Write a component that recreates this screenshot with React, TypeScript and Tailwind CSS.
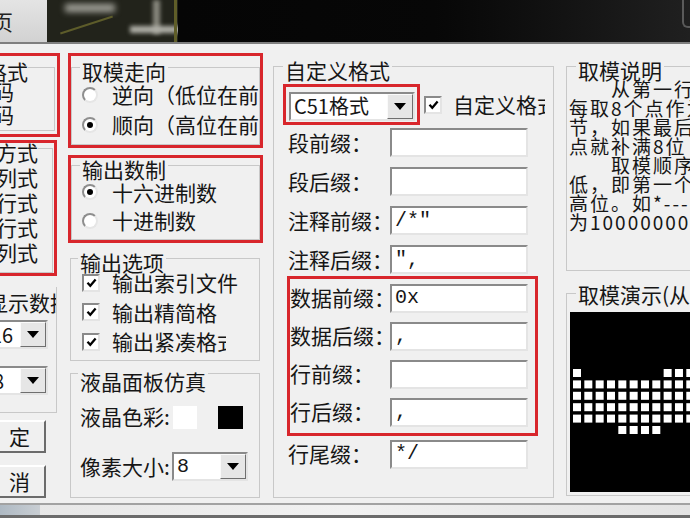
import type { ReactNode } from "react";

const red = "border-[3px] border-[#d8262c]";
const sunken =
  "border-2 border-t-[#8a8a8a] border-l-[#8a8a8a] border-r-[#e4e4e4] border-b-[#e4e4e4] bg-white";

function Group({
  title,
  className = "",
  legend = "ml-[8px] px-[2px] pt-[8px]",
  children,
}: {
  title: string;
  className?: string;
  legend?: string;
  children?: ReactNode;
}) {
  return (
    <fieldset className={`min-w-0 shrink-0 border border-[#c8c8c8] ${className}`}>
      <legend className={`whitespace-nowrap text-[21px] leading-[22px] ${legend}`}>{title}</legend>
      {children}
    </fieldset>
  );
}

function Radio({ checked = false }: { checked?: boolean }) {
  return (
    <span className="flex h-[16px] w-[16px] shrink-0 items-center justify-center rounded-full border-2 border-t-[#8e8e8e] border-l-[#8e8e8e] border-r-[#e6e6e6] border-b-[#e6e6e6] bg-white">
      {checked && <span className="h-[6px] w-[6px] rounded-full bg-black" />}
    </span>
  );
}

function Check() {
  return (
    <span className={`flex h-[18px] w-[18px] shrink-0 items-center justify-center ${sunken}`}>
      <svg width="11" height="10" viewBox="0 0 11 10">
        <path d="M1.5 4.8 L4.3 7.8 L9.6 1.6" fill="none" stroke="#000" strokeWidth="2.3" />
      </svg>
    </span>
  );
}

function DropButton() {
  return (
    <span className="flex h-full w-[26px] shrink-0 items-center justify-center border border-t-[#fafafa] border-l-[#fafafa] border-r-[#6f6f6f] border-b-[#6f6f6f] bg-[#e6e6e6]">
      <svg width="12" height="7" viewBox="0 0 12 7">
        <polygon points="0,0 12,0 6,7" fill="#000" />
      </svg>
    </span>
  );
}

function Combo({ value, className = "", mono = false }: { value: string; className?: string; mono?: boolean }) {
  return (
    <div className={`flex h-[29px] shrink-0 ${sunken} ${className}`}>
      <span
        className={`flex min-w-0 flex-1 items-center overflow-hidden whitespace-nowrap pl-[3px] text-[20px] ${
          mono ? "font-['Liberation_Mono',monospace]" : ""
        }`}
      >
        {value}
      </span>
      <DropButton />
    </div>
  );
}

function Field({ value = "" }: { value?: string }) {
  return (
    <div
      className={`flex h-[29px] w-[138px] shrink-0 items-center pl-[3px] font-['Liberation_Mono',monospace] text-[20px] ${sunken}`}
    >
      {value}
    </div>
  );
}

function Button({ label, className = "" }: { label: string; className?: string }) {
  return (
    <div
      className={`flex h-[33px] w-[90px] shrink-0 items-center justify-end self-end whitespace-nowrap border-2 border-t-[#ffffff] border-l-[#ffffff] border-r-[#6b6b6b] border-b-[#6b6b6b] pr-[14px] text-[21px] ${className}`}
    >
      {label}
    </div>
  );
}

const note = [
  "　　从第一行开始向右",
  "每取8个点作为一个字",
  "节，如果最后不足8个",
  "点就补满8位",
  "　　取模顺序是从高到",
  "低，即第一个点作为最",
  "高位。如*-------取",
  "为10000000",
];

const full = [0, 1, 2, 3, 4, 5, 6, 7, 8, 9, 10];
const dotRows = [[0, 8, 9, 10], full, full, full, full, [4, 5, 6, 7]];

function TopStrip() {
  return (
    <div className="flex h-[44px] shrink-0 overflow-hidden border-b-2 border-[#7f7f7f]">
      <div className="flex w-[47px] shrink-0 items-center overflow-hidden bg-gradient-to-b from-[#e4e4e4] to-[#d2d2d2]">
        <span className="-ml-[8px] text-[21px] leading-none text-[#222]">页</span>
      </div>
      <div className="relative w-[131px] shrink-0 overflow-hidden bg-[#22231b]">
        <div className="absolute left-[18px] top-[4px] h-[8px] w-[50px] bg-[#a3a39a] blur-[3px]" />
        <div className="absolute left-[106px] top-0 h-[34px] w-[7px] bg-[#8a8a80] blur-[2px]" />
        <div className="absolute left-[83px] top-[26px] h-[7px] w-[75px] bg-[#b0b0a8] blur-[2px]" />
        <div className="absolute left-[12px] top-[24px] h-[2px] w-[55px] rotate-[-18deg] bg-[#5d5c2a]" />
        <div className="absolute left-[127px] top-0 h-[42px] w-[3px] bg-[#5f5d28]" />
      </div>
      <div className="relative flex-1 bg-gradient-to-r from-[#050505] via-[#070707] to-[#202020]">
        <div className="absolute -top-[10px] right-0 h-[38px] w-[8px] rounded-bl-[6px] border-b-2 border-l-2 border-[#5a5a5a]" />
      </div>
    </div>
  );
}

function BottomStrip() {
  return (
    <div className="flex h-[15px] shrink-0 flex-col border-t-2 border-[#a2a2a2]">
      <div className="flex flex-1 bg-gradient-to-r from-[#e6e6e6] via-[#f1f1f1] to-[#e3e3e3]">
        <div className="w-[40px] bg-gradient-to-r from-[#aeb9c3] to-[#c9ced3]" />
      </div>
      <div className="h-[3px] bg-[#6b6b6b]" />
    </div>
  );
}

export default function App() {
  return (
    <div className="flex h-[518px] w-[690px] flex-col overflow-hidden bg-[#f0f0f0] font-['Noto_Sans_CJK_SC',sans-serif] text-[#161616]">
      <TopStrip />
      <main className="flex h-[459px] shrink-0 items-start">
        {/* left column, mostly off-screen */}
        <div className="-ml-[60px] flex w-[120px] shrink-0 flex-col pt-[9px]">
          <div className={`h-[84px] w-[120px] ${red}`}>
            <Group title="点阵格式" legend="ml-0 px-0 pt-[8px]" className="-mt-[4px] mr-[2px] h-[79px]">
              <div className="-mt-[1.5px]">
                {["阴码", "阳码"].map((t, i) => (
                  <div key={t} className="flex h-[23px] items-center gap-[6px] pl-[6px] text-[21px]">
                    <Radio checked={i === 0} />
                    <span>{t}</span>
                  </div>
                ))}
              </div>
            </Group>
          </div>
          <div className={`mt-[3px] h-[136px] w-[117px] ${red}`}>
            <Group title="取模方式" legend="ml-[10px] px-0 pt-[8px]" className="-mt-[10px] mr-[1px] h-[140px]">
              <div className="mt-[2.5px]">
                {["逐列式", "逐行式", "列行式", "行列式"].map((t, i) => (
                  <div key={t} className="flex h-[25px] items-center gap-[6px] pl-[9px] text-[21px]">
                    <Radio checked={i === 1} />
                    <span>{t}</span>
                  </div>
                ))}
              </div>
            </Group>
          </div>
          <div className="mt-[11px] flex h-[126px] w-[117px] flex-col overflow-hidden border-b border-r border-[#c8c8c8]">
            <div className="whitespace-nowrap pl-[5px] pt-[3px] text-[21px] leading-[24px]">每行显示数据</div>
            <Combo value="16" className="mr-[8px] mt-[6px] w-[62px] self-end" />
            <Combo value="8" className="mr-[8px] mt-[17px] w-[60px] self-end" />
          </div>
          <Button label="确　定" className="mr-[14px] mt-[7px]" />
          <Button label="取　消" className="mr-[14px] mt-[12px]" />
        </div>

        {/* second column */}
        <div className="ml-[8px] flex w-[195px] shrink-0 flex-col pt-[9px]">
          <div className={`h-[95px] ${red}`}>
            <Group title="取模走向" className="-mt-[4px] h-[93px]">
              <div className="-mt-[2px] overflow-hidden">
                {["逆向（低位在前）", "顺向（高位在前）"].map((t, i) => (
                  <div key={t} className="flex h-[30px] items-center gap-[14px] whitespace-nowrap pl-[10px] text-[21px]">
                    <Radio checked={i === 1} />
                    <span>{t}</span>
                  </div>
                ))}
              </div>
            </Group>
          </div>
          <div className={`mt-[7px] h-[88px] ${red}`}>
            <Group title="输出数制" className="-mt-[8px] h-[90px]">
              <div className="-mt-[2px]">
                {["十六进制数", "十进制数"].map((t, i) => (
                  <div key={t} className="flex h-[28.5px] items-center gap-[14px] pl-[10px] text-[21px]">
                    <Radio checked={i === 0} />
                    <span>{t}</span>
                  </div>
                ))}
              </div>
            </Group>
          </div>
          <Group title="输出选项" legend="ml-[7px] px-[2px] pt-[8px]" className="ml-[2px] h-[118px] w-[190px]">
            <div className="-mt-[5px]">
              {[
                ["输出索引文件", "w-[130px]"],
                ["输出精简格式", "w-[105px]"],
                ["输出紧凑格式", "w-[114px]"],
              ].map(([t, w]) => (
                <div key={t} className="flex h-[29.5px] items-center gap-[12px] pl-[11px] text-[21px]">
                  <Check />
                  <span className={`overflow-hidden whitespace-nowrap ${w}`}>{t}</span>
                </div>
              ))}
            </div>
          </Group>
          <Group
            title="液晶面板仿真"
            legend="ml-[7px] px-[2px] pt-[16px]"
            className="-mt-[7px] ml-[2px] h-[144px] w-[190px]"
          >
            <div className="mt-[13px] flex h-[24px] items-center pl-[9px] text-[21px]">
              <span className="w-[93px]">液晶色彩:</span>
              <span className="h-[23px] w-[24px] bg-white" />
              <span className="ml-[21px] h-[23px] w-[25px] bg-black" />
            </div>
            <div className="mt-[22px] flex items-center pl-[9px] text-[21px]">
              <span className="w-[92px]">像素大小:</span>
              <Combo value="8" mono className="w-[76px]" />
            </div>
          </Group>
        </div>

        {/* custom format column */}
        <Group title="自定义格式" legend="ml-[9px] px-[2px] pt-[8px]" className="ml-[10px] mt-[7px] h-[447px] w-[281px]">
          <div className="ml-[9px] mt-[3px] flex items-center">
            <div className={`flex h-[41px] w-[137px] items-center pl-[3px] pt-[3px] ${red}`}>
              <Combo value="C51格式" className="w-[126px]" />
            </div>
            <span className="ml-[4px]">
              <Check />
            </span>
            <span className="ml-[11px] w-[92px] overflow-hidden whitespace-nowrap text-[21px]">自定义格式</span>
          </div>
          <div className="-mt-[2px]">
            {[
              ["段前缀：", ""],
              ["段后缀：", ""],
              ["注释前缀：", "/*\""],
              ["注释后缀：", "\","],
            ].map(([l, v]) => (
              <div key={l} className="flex h-[39px] items-center pl-[14px] text-[21px]">
                <span className="w-[102px] whitespace-nowrap">{l}</span>
                <Field value={v} />
              </div>
            ))}
          </div>
          <div className={`-mt-[3px] ml-[13px] w-[251px] pb-[2px] ${red}`}>
            {[
              ["数据前缀：", "0x"],
              ["数据后缀：", ","],
              ["行前缀：", ""],
              ["行后缀：", ","],
            ].map(([l, v]) => (
              <div key={l} className="flex h-[38px] items-center text-[21px]">
                <span className="w-[100px] whitespace-nowrap">{l}</span>
                <Field value={v} />
              </div>
            ))}
          </div>
          <div className="flex h-[36px] items-center pl-[14px] text-[21px]">
            <span className="w-[102px] whitespace-nowrap">行尾缀：</span>
            <Field value="*/" />
          </div>
        </Group>

        {/* help and preview column */}
        <div className="ml-[12px] flex w-[150px] shrink-0 flex-col">
          <Group title="取模说明" legend="ml-[9px] px-[2px] pt-[8px]" className="mt-[7px] h-[220px]">
            <div className="-mt-[2px] pl-[2px] text-[19px] leading-[19px] tracking-[2px]">
              {note.map((line) => (
                <div key={line} className="whitespace-nowrap">
                  {line}
                </div>
              ))}
            </div>
          </Group>
          <Group
            title="取模演示(从左到右逐列)"
            legend="ml-[9px] px-[2px] pt-[2px]"
            className="mt-[10px] h-[215px]"
          >
            <div className="ml-[3px] mt-[7px] h-[180px] bg-black">
              <svg width="147" height="180" viewBox="0 0 147 180">
                {dotRows.map((cols, r) =>
                  cols.map((c) => (
                    <rect key={`${r}-${c}`} x={3 + c * 11.33} y={57 + r * 11.4} width="8" height="8" fill="#fff" />
                  ))
                )}
              </svg>
            </div>
          </Group>
        </div>
      </main>
      <BottomStrip />
    </div>
  );
}
